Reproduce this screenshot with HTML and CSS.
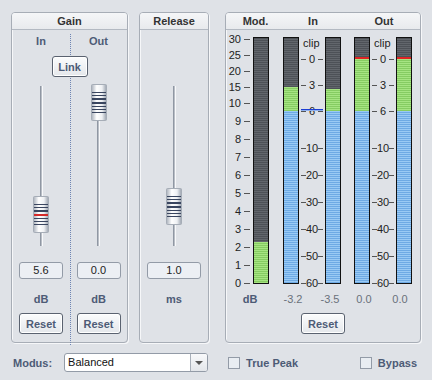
FILE: index.html
```html
<!DOCTYPE html>
<html lang="en">
<head>
    <meta charset="UTF-8">
    <meta name="viewport" content="width=device-width, initial-scale=1.0">
    <title>Limiter</title>
    <link rel="stylesheet" href="styles.css">
</head>
<body>

<svg class="defs" width="0" height="0" aria-hidden="true">
    <defs>
        <linearGradient id="thumb-shade" x1="0" x2="1" y1="0" y2="0">
            <stop offset="0" stop-color="#a9b0bb"/>
            <stop offset="0.35" stop-color="#ffffff"/>
            <stop offset="0.7" stop-color="#eef0f3"/>
            <stop offset="1" stop-color="#9aa2ae"/>
        </linearGradient>
        <symbol id="thumb" viewBox="0 0 16 37">
            <rect x="0.5" y="0.5" width="15" height="36" rx="1" fill="url(#thumb-shade)" stroke="#a6adb7"/>
            <g fill="#3a4660">
                <rect x="1" y="8" width="14" height="1"/>
                <rect x="1" y="11" width="14" height="1"/>
                <rect x="1" y="14" width="14" height="2"/>
                <rect x="1" y="18" width="14" height="2"/>
                <rect x="1" y="22" width="14" height="1"/>
                <rect x="1" y="25" width="14" height="1"/>
                <rect x="1" y="28" width="14" height="1"/>
            </g>
        </symbol>
    </defs>
</svg>

<div class="window">
    <div class="panels">

        <section class="panel gain">
            <h2 class="panel-head">Gain</h2>
            <div class="gain-body">
                <div class="col-label">In</div>
                <div class="col-label">Out</div>
                <div class="link-row"><button class="btn link">Link</button></div>

                <div class="slider">
                    <div class="track"></div>
                    <svg class="thumb" style="top:116px" width="16" height="37" viewBox="0 0 16 37">
                        <use href="#thumb"/>
                        <rect x="1" y="18" width="14" height="2" fill="#d42a2a"/>
                    </svg>
                </div>
                <div class="slider">
                    <div class="track"></div>
                    <svg class="thumb" style="top:4px" width="16" height="37" viewBox="0 0 16 37"><use href="#thumb"/></svg>
                </div>

                <div class="value">5.6</div>
                <div class="value">0.0</div>
                <div class="unit">dB</div>
                <div class="unit">dB</div>
                <button class="btn reset">Reset</button>
                <button class="btn reset">Reset</button>
            </div>
        </section>

        <section class="panel release">
            <h2 class="panel-head">Release</h2>
            <div class="release-body">
                <div class="slider">
                    <div class="track"></div>
                    <svg class="thumb" style="top:108px" width="16" height="37" viewBox="0 0 16 37"><use href="#thumb"/></svg>
                </div>
                <div class="value wide">1.0</div>
                <div class="unit">ms</div>
            </div>
        </section>

        <section class="panel meters">
            <h2 class="panel-head meter-head">
                <span class="head-mod">Mod.</span>
                <span class="head-in">In</span>
                <span class="head-out">Out</span>
            </h2>
            <div class="meter-body">
                <div class="meter-row">
                    <div class="scale mod-scale">
                        <span style="top:-5px">30</span>
                        <span style="top:11px">25</span>
                        <span style="top:27px">20</span>
                        <span style="top:43px">15</span>
                        <span style="top:59px">10</span>
                        <span style="top:77px">9</span>
                        <span style="top:95px">8</span>
                        <span style="top:113px">7</span>
                        <span style="top:131px">6</span>
                        <span style="top:149px">5</span>
                        <span style="top:167px">4</span>
                        <span style="top:185px">3</span>
                        <span style="top:203px">2</span>
                        <span style="top:221px">1</span>
                        <span style="top:239px">0</span>
                    </div>
                    <div class="bar">
                        <div class="fill green" style="height:41px"></div>
                    </div>

                    <div class="bar gap-l">
                        <div class="fill green" style="height:24px"></div>
                        <div class="fill blue" style="height:172px"></div>
                    </div>
                    <div class="scale db-scale">
                        <span class="clip">clip</span>
                        <span style="top:15px"><i></i><b>0</b><i></i></span>
                        <span style="top:41px"><i></i><b>3</b><i></i></span>
                        <span style="top:67px"><i></i><b>6</b><i></i></span>
                        <span style="top:104px"><i></i><b>10</b><i></i></span>
                        <span style="top:131px"><i></i><b>20</b><i></i></span>
                        <span style="top:158px"><i></i><b>30</b><i></i></span>
                        <span style="top:185px"><i></i><b>40</b><i></i></span>
                        <span style="top:212px"><i></i><b>50</b><i></i></span>
                        <span style="top:239px"><i></i><b>60</b><i></i></span>
                        <div class="peak" style="top:72px"></div>
                    </div>
                    <div class="bar">
                        <div class="fill green" style="height:22px"></div>
                        <div class="fill blue" style="height:172px"></div>
                    </div>

                    <div class="bar gap-r">
                        <div class="fill red"></div>
                        <div class="fill green" style="height:52px"></div>
                        <div class="fill blue" style="height:172px"></div>
                    </div>
                    <div class="scale db-scale">
                        <span class="clip">clip</span>
                        <span style="top:15px"><i></i><b>0</b><i></i></span>
                        <span style="top:41px"><i></i><b>3</b><i></i></span>
                        <span style="top:67px"><i></i><b>6</b><i></i></span>
                        <span style="top:104px"><i></i><b>10</b><i></i></span>
                        <span style="top:131px"><i></i><b>20</b><i></i></span>
                        <span style="top:158px"><i></i><b>30</b><i></i></span>
                        <span style="top:185px"><i></i><b>40</b><i></i></span>
                        <span style="top:212px"><i></i><b>50</b><i></i></span>
                        <span style="top:239px"><i></i><b>60</b><i></i></span>
                    </div>
                    <div class="bar">
                        <div class="fill red"></div>
                        <div class="fill green" style="height:52px"></div>
                        <div class="fill blue" style="height:172px"></div>
                    </div>
                </div>

                <div class="readouts">
                    <span class="r-db">dB</span>
                    <span class="r1">-3.2</span>
                    <span class="r2">-3.5</span>
                    <span class="r3">0.0</span>
                    <span class="r4">0.0</span>
                </div>
                <button class="btn reset">Reset</button>
            </div>
        </section>

    </div>

    <div class="bottom">
        <span class="label">Modus:</span>
        <div class="combo">
            <span class="combo-text">Balanced</span>
            <span class="combo-arrow"></span>
        </div>
        <label class="check"><span class="box"></span>True Peak</label>
        <label class="check bypass"><span class="box"></span>Bypass</label>
    </div>
</div>

</body>
</html>
```

FILE: styles.css
```css
body {
    margin: 0;
    background-color: #dfe2e7;
    font-family: "Liberation Sans", Arial, sans-serif;
    font-size: 11px;
    color: #222;
}
.defs {
    position: absolute;
}
.window {
    padding: 12px 0 0 11px;
}
.panels {
    display: flex;
    height: 331px;
}
.panel {
    box-sizing: border-box;
    display: flex;
    flex-direction: column;
    border: 1px solid #a7adb6;
    border-radius: 4px;
    box-shadow: inset 1px 1px 0 #f6f7f9, 1px 1px 0 #f6f7f9;
}
.gain {
    width: 117px;
    margin-right: 11px;
}
.release {
    width: 70px;
    margin-right: 16px;
}
.meters {
    width: 196px;
}
.panel-head {
    margin: 0;
    height: 16px;
    line-height: 16px;
    border-bottom: 1px solid #b3b9c2;
    border-radius: 3px 3px 0 0;
    background: linear-gradient(#f5f6f8, #e8eaed);
    font-size: 11px;
    font-weight: bold;
    color: #333;
    text-align: center;
}

/* buttons and fields */
.btn {
    box-sizing: border-box;
    height: 21px;
    padding: 0;
    border: 1px solid #5a6270;
    border-radius: 3px;
    background: linear-gradient(#fbfcfd, #e4e7eb);
    box-shadow: inset 0 0 0 1px #fff;
    font-family: "Liberation Sans", Arial, sans-serif;
    font-size: 11px;
    font-weight: bold;
    color: #4d5b76;
}
.link {
    width: 36px;
    position: relative;
    z-index: 1;
}
.reset {
    width: 44px;
    margin-top: 7px;
}
.value {
    box-sizing: border-box;
    width: 44px;
    height: 17px;
    margin-top: 12px;
    line-height: 15px;
    border: 1px solid #939ba7;
    border-radius: 3px;
    background-color: #eceff4;
    text-align: center;
}
.value.wide {
    width: 54px;
}
.unit, .col-label, .label, .check {
    font-weight: bold;
    color: #4d5b76;
}
.unit {
    padding-top: 13px;
    line-height: 14px;
}

/* gain */
.gain-body {
    position: relative;
    display: grid;
    grid-template-columns: 58px 57px;
    grid-template-rows: 22px 28px 170px 29px 27px 28px;
    justify-items: center;
}
.gain-body::before {
    content: "";
    position: absolute;
    left: 58px;
    top: 4px;
    bottom: -11px;
    border-left: 1px dotted #6d84b3;
}
.col-label {
    line-height: 22px;
}
.link-row {
    grid-column: 1 / -1;
    padding-top: 4px;
}

/* sliders */
.slider {
    position: relative;
    width: 16px;
    height: 170px;
}
.track {
    width: 3px;
    height: 160px;
    margin: 6px auto 0;
    background: linear-gradient(to right, #8f97a3 0 1px, #b9bec6 1px 2px, #f7f8fa 2px 3px);
}
.thumb {
    position: absolute;
    left: 0;
    display: block;
}

/* release */
.release-body {
    display: flex;
    flex-direction: column;
    align-items: center;
    padding-top: 50px;
}

/* meters */
.meter-head {
    display: flex;
    padding-left: 1px;
}
.head-mod { width: 57px; }
.head-in { width: 58px; }
.head-out { width: 58px; margin-left: 13px; }

.meter-body {
    display: flex;
    flex-direction: column;
    align-items: center;
    padding-top: 7px;
}
.meter-row {
    display: flex;
    align-self: flex-start;
    height: 247px;
}
.scale {
    position: relative;
    height: 247px;
}
.scale span {
    position: absolute;
    line-height: 14px;
    display: flex;
    align-items: center;
}
.mod-scale {
    width: 27px;
}
.mod-scale span {
    right: 3px;
}
.mod-scale span::after {
    content: "";
    width: 6px;
    height: 1px;
    margin-left: 3px;
    background-color: #555;
}
.db-scale {
    width: 26px;
}
.db-scale span {
    left: 2px;
    width: 22px;
}
.db-scale i {
    width: 5px;
    height: 1px;
    background-color: #555;
}
.db-scale b {
    width: 12px;
    font-weight: normal;
    text-align: center;
}
.db-scale .clip {
    top: -1px;
    left: 4px;
    width: auto;
}
.peak {
    position: absolute;
    left: 2px;
    width: 22px;
    height: 1px;
    background-color: #1b3dd2;
    border-bottom: 1px solid #8fb0ee;
}
.bar {
    box-sizing: border-box;
    width: 16px;
    height: 247px;
    display: flex;
    flex-direction: column;
    justify-content: flex-end;
    border: 1px solid #111;
    background: repeating-linear-gradient(#4d5157 0 1px, #62666c 1px 2px);
}
.bar.gap-l {
    margin-left: 14px;
}
.bar.gap-r {
    margin-left: 13px;
}
.fill.green {
    background: repeating-linear-gradient(#a6e482 0 1px, #86cc62 1px 2px);
}
.fill.blue {
    background: repeating-linear-gradient(#9acaf4 0 1px, #6eaae4 1px 2px);
}
.fill.red {
    height: 2px;
    background-color: #e02424;
}
.readouts {
    display: flex;
    align-self: flex-start;
    margin-top: 8px;
    line-height: 14px;
    color: #6a717b;
}
.readouts span {
    text-align: center;
}
.r-db {
    width: 48px;
    font-weight: bold;
    color: #4d5b76;
}
.r1 { width: 38px; }
.r2 { width: 36px; }
.r3 { width: 32px; }
.r4 { width: 40px; }

/* bottom row */
.bottom {
    display: flex;
    align-items: center;
    height: 19px;
    margin-top: 10px;
    padding-right: 15px;
}
.label {
    margin-left: 2px;
    margin-right: 12px;
}
.combo {
    box-sizing: border-box;
    display: flex;
    width: 144px;
    height: 19px;
    border: 1px solid #939ba7;
    border-radius: 3px;
    background-color: #fff;
}
.combo-text {
    flex: 1;
    padding-left: 3px;
    line-height: 17px;
    color: #111;
}
.combo-arrow {
    position: relative;
    width: 16px;
    border-left: 1px solid #a9b0ba;
    border-radius: 0 2px 2px 0;
    background: linear-gradient(#f8f9fb, #e3e6ea);
}
.combo-arrow::after {
    content: "";
    position: absolute;
    left: 4px;
    top: 7px;
    border-left: 4px solid transparent;
    border-right: 4px solid transparent;
    border-top: 4px solid #555;
}
.check {
    display: flex;
    align-items: center;
    margin-left: 20px;
}
.check.bypass {
    margin-left: auto;
}
.box {
    box-sizing: border-box;
    width: 12px;
    height: 12px;
    margin-right: 6px;
    border: 1px solid #939ba7;
    background-color: #e9edf2;
}
```
